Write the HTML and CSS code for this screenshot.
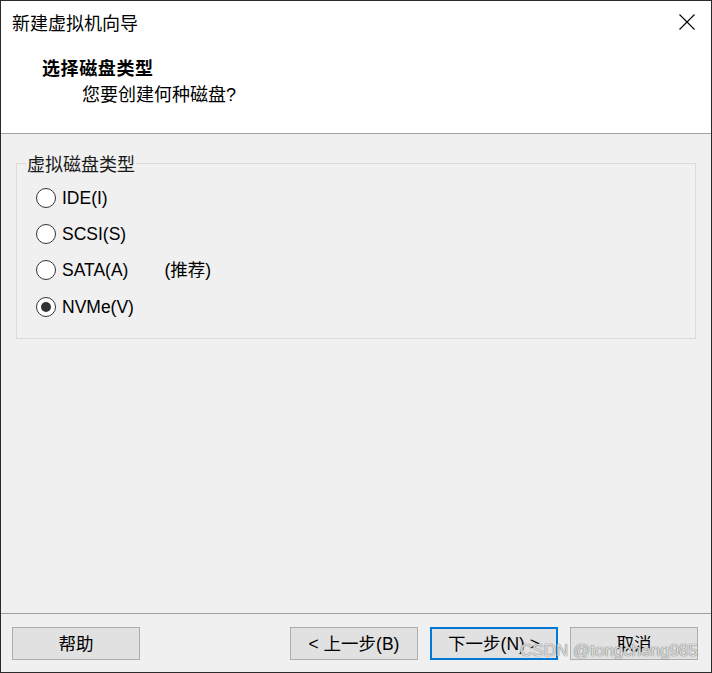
FILE: index.html
```html
<!DOCTYPE html>
<html lang="zh-CN">
<head>
<meta charset="utf-8">
<title>新建虚拟机向导</title>
<link rel="stylesheet" href="styles.css">
</head>
<body>
<div class="window">
  <div class="header">
    <div class="titlebar">
      <span class="title">新建虚拟机向导</span>
      <svg class="close" width="16" height="16" viewBox="0 0 16 16"><path d="M0.5 0.5 L15.5 15.5 M15.5 0.5 L0.5 15.5" stroke="#000" stroke-width="1.1" fill="none"/></svg>
    </div>
    <div class="heading">选择磁盘类型</div>
    <div class="subheading">您要创建何种磁盘?</div>
  </div>
  <div class="content">
    <fieldset class="group">
      <legend class="legend">虚拟磁盘类型</legend>
      <label class="row"><input type="radio" name="disk" class="radio"><span class="lbl">IDE(I)</span></label>
      <label class="row"><input type="radio" name="disk" class="radio"><span class="lbl">SCSI(S)</span></label>
      <label class="row"><input type="radio" name="disk" class="radio"><span class="lbl">SATA(A)</span><span class="note">(推荐)</span></label>
      <label class="row last"><input type="radio" name="disk" class="radio" checked><span class="lbl">NVMe(V)</span></label>
    </fieldset>
  </div>
  <div class="footer">
    <button class="btn">帮助</button>
    <div class="spacer"></div>
    <button class="btn">&lt; 上一步(B)</button>
    <button class="btn primary">下一步(N) &gt;</button>
    <button class="btn">取消</button>
  </div>
  <div class="watermark">CSDN @tongcheng985</div>
</div>
</body>
</html>
```

FILE: styles.css
```css
* { box-sizing: border-box; }
html, body { margin: 0; padding: 0; background: #f0f0f0; }
body {
  font-family: "Liberation Sans", "Noto Sans CJK SC", sans-serif;
  color: #000;
}
.window {
  position: relative;
  width: 712px;
  height: 673px;
  border: 1px solid #2b2b2b;
  display: flex;
  flex-direction: column;
  background: #f0f0f0;
}
.header {
  height: 133px;
  background: #fff;
  border-bottom: 1px solid #a0a0a0;
  flex: none;
}
.titlebar {
  height: 41px;
  display: flex;
  align-items: center;
  padding-left: 11px;
  padding-right: 16px;
}
.title {
  font-family: "Noto Sans CJK SC", sans-serif;
  font-size: 18px;
  line-height: 24px;
  flex: 1;
}
.close { display: block; margin-top: 1px; }
.heading {
  margin-top: 13px;
  padding-left: 41px;
  font-family: "Noto Sans CJK SC", sans-serif;
  font-weight: bold;
  font-size: 18px;
  letter-spacing: 0.6px;
  line-height: 24px;
}
.subheading {
  margin-top: 4px;
  padding-left: 81px;
  font-family: "Liberation Sans", "Noto Sans CJK SC", sans-serif;
  font-size: 18px;
  line-height: 24px;
}
.content {
  flex: 1;
  padding: 19px 15px 0 15px;
}
.group {
  margin: 0;
  border: 1px solid #dcdcdc;
  padding: 7px 0 12px 9px;
}
.legend {
  font-family: "Noto Sans CJK SC", sans-serif;
  font-size: 18px;
  line-height: 20px;
  padding: 0 1px;
  margin: 0;
  color: #1a1a1a;
}
.row {
  display: flex;
  align-items: center;
  height: 36px;
  margin-left: 10px;
}
.row.last { height: 38px; }
.radio {
  appearance: none;
  -webkit-appearance: none;
  margin: 0;
  width: 20px;
  height: 20px;
  border: 1px solid #333;
  border-radius: 50%;
  background: #fff;
  display: flex;
  align-items: center;
  justify-content: center;
  flex: none;
}
.radio:checked::after {
  content: "";
  width: 10px;
  height: 10px;
  border-radius: 50%;
  background: #333;
}
.lbl {
  margin-left: 6px;
  font-size: 17.5px;
  line-height: 20px;
}
.note {
  margin-left: 36px;
  font-family: "Liberation Sans", "Noto Sans CJK SC", sans-serif;
  font-size: 17.5px;
  line-height: 20px;
}
.footer {
  flex: none;
  height: 59px;
  border-top: 1px solid #a0a0a0;
  display: flex;
  align-items: flex-start;
  gap: 12px;
  padding: 13px 13px 0 11px;
}
.spacer { flex: 1; }
.btn {
  width: 128px;
  height: 33px;
  margin: 0;
  padding: 0;
  background: #e1e1e1;
  border: 1px solid #adadad;
  font-family: "Liberation Sans", "Noto Sans CJK SC", sans-serif;
  font-size: 17.5px;
  line-height: 20px;
  color: #000;
}
.btn.primary {
  border: 2px solid #0078d7;
}
.watermark {
  position: absolute;
  top: 640px;
  right: 13px;
  font-family: "Liberation Sans", sans-serif;
  font-size: 17px;
  line-height: 20px;
  color: rgba(240, 240, 240, 0.85);
  text-shadow: 0 0 1px #6a6a6a, 0 0 1px #8a8a8a;
  white-space: nowrap;
}
```
